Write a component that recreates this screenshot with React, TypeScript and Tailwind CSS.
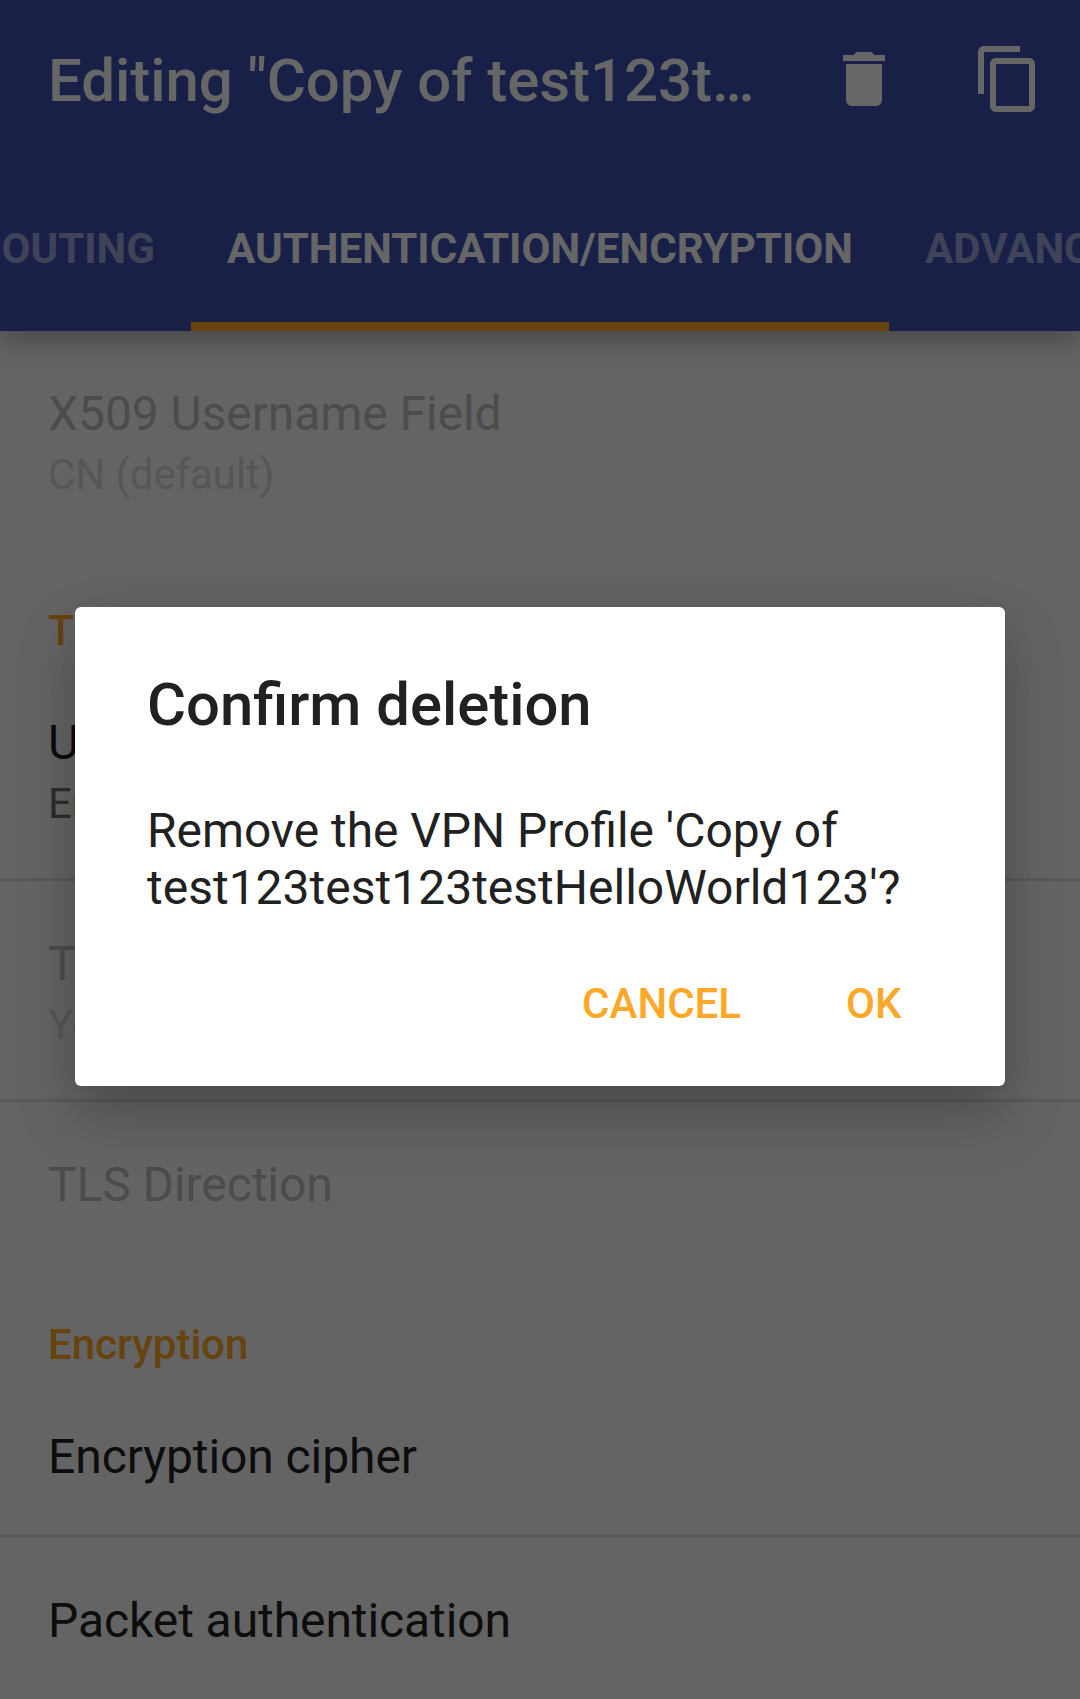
import type { ReactNode } from "react";

type RowProps = { title: string; summary?: string; disabled?: boolean; divider?: boolean };

function Row({ title, summary, disabled = false, divider = false }: RowProps) {
  return (
    <div
      className={
        (summary ? "h-[218px]" : "h-[161px]") +
        " box-content shrink-0 px-[48px] " +
        (divider ? "border-b-[3px] border-[#dedede]" : "")
      }
    >
      <div
        className={
          "pt-[55px] text-[48px] leading-[56px] tracking-[-0.08px] " +
          (disabled ? "text-[#bfbfbf]" : "text-[#212121]")
        }
      >
        {title}
      </div>
      {summary && (
        <div
          className={
            "mt-[8px] text-[42px] leading-[49px] tracking-[-0.08px] " +
            (disabled ? "text-[#d7d7d7]" : "text-[#727272]")
          }
        >
          {summary}
        </div>
      )}
    </div>
  );
}

function Category({ children }: { children: ReactNode }) {
  return (
    <div className="h-[111px] shrink-0 px-[48px] pt-[57px] text-[42px] leading-[49px] font-medium text-[#ffa726]">
      {children}
    </div>
  );
}

function TrashIcon() {
  return (
    <svg className="size-[72px]" viewBox="0 0 24 24" fill="currentColor">
      <path d="M6 19c0 1.1.9 2 2 2h8c1.1 0 2-.9 2-2V7H6v12zM19 4h-3.5l-1-1h-5l-1 1H5v2h14V4z" />
    </svg>
  );
}

function CopyIcon() {
  return (
    <svg className="size-[72px]" viewBox="0 0 24 24" fill="currentColor">
      <path d="M16 1H4c-1.1 0-2 .9-2 2v14h2V3h12V1zm3 4H8c-1.1 0-2 .9-2 2v14c0 1.1.9 2 2 2h11c1.1 0 2-.9 2-2V7c0-1.1-.9-2-2-2zm0 16H8V7h11v14z" />
    </svg>
  );
}

export default function App() {
  return (
    <div className="relative flex h-[1699px] w-[1080px] flex-col overflow-hidden bg-[#fafafa] font-['Roboto',sans-serif] whitespace-nowrap">
      <header className="relative z-10 flex h-[331px] shrink-0 flex-col justify-between bg-[#3f51b5] text-white shadow-[0_12px_24px_rgba(0,0,0,0.26)]">
        <div className="flex h-[158px] items-center justify-between pr-[36px] pl-[48px]">
          <h1 className="pt-[4px] text-[60px] leading-[70px] font-medium tracking-[-0.06px]">
            Editing "Copy of test123t…
          </h1>
          <div className="flex gap-[72px]">
            <TrashIcon />
            <CopyIcon />
          </div>
        </div>
        <nav className="flex h-[144px] w-full justify-center text-[42px] leading-[49px] font-bold tracking-[0.06px]">
          <div className="flex w-[191px] shrink-0 justify-end overflow-hidden pt-[37px] pr-[36px] text-white/50">
            OUTING
          </div>
          <div className="w-[698px] shrink-0 border-b-[9px] border-[#ffa726] pt-[37px] text-center">
            AUTHENTICATION/ENCRYPTION
          </div>
          <div className="w-[191px] shrink-0 overflow-hidden pt-[37px] pl-[36px] text-white/50">ADVANCED</div>
        </nav>
      </header>

      <main className="flex flex-col">
        <Row title="X509 Username Field" summary="CN (default)" disabled />
        <Category>TLS Authentication</Category>
        <Row title="Use TLS Auth" summary="Enable TLS Auth" divider />
        <Row title="TLS Auth File" summary="You must select a file" disabled divider />
        <Row title="TLS Direction" disabled />
        <Category>Encryption</Category>
        <Row title="Encryption cipher" divider />
        <Row title="Packet authentication" />
      </main>

      <div className="absolute inset-0 z-20 bg-black/60">
        <div
          role="dialog"
          className="mx-auto mt-[607px] flex h-[479px] w-[930px] flex-col rounded-[6px] bg-white px-[72px] text-[#212121] shadow-[0_30px_60px_rgba(0,0,0,0.23),0_0_36px_rgba(0,0,0,0.05)]"
        >
          <h2 className="mt-[63px] text-[59.8px] leading-[70px] font-medium">Confirm deletion</h2>
          <p className="mt-[62px] text-[48px] leading-[57px]">
            <span className="block h-[57px] text-[47.9px] leading-[59px]">Remove the VPN Profile 'Copy of</span>
            <span className="block h-[57px]">test123test123testHelloWorld123'?</span>
          </p>
          <div className="mt-[63px] flex justify-end gap-[105px] pr-[31.5px] text-[42px] leading-[49px] font-medium text-[#ffa726]">
            <button>CANCEL</button>
            <button>OK</button>
          </div>
        </div>
      </div>
    </div>
  );
}
